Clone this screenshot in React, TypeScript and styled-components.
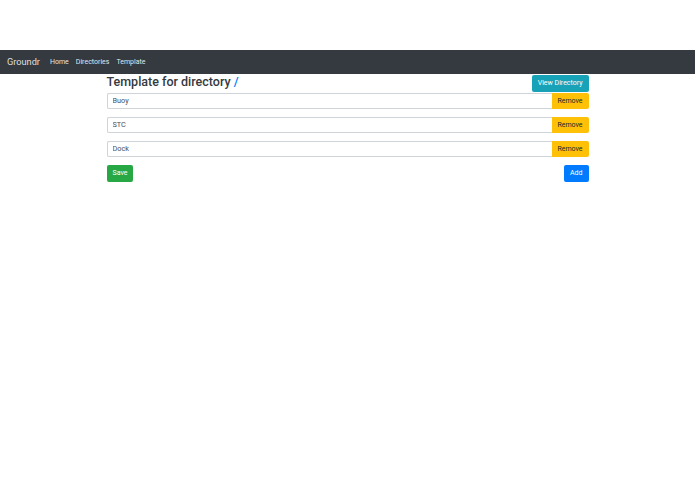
import React, { useState } from "react";
import styled, { createGlobalStyle } from "styled-components";

const GlobalStyle = createGlobalStyle`
  body {
    margin: 0;
    background: #fff;
    font-family: Roboto, "Liberation Sans", sans-serif;
    color: #212529;
    -webkit-font-smoothing: antialiased;
  }
  * {
    box-sizing: border-box;
  }
`;

const Page = styled.div`
  padding-top: 50px;
`;

const Navbar = styled.nav`
  display: flex;
  align-items: center;
  height: 23.5px;
  padding: 0 7px;
  background: #343a40;
`;

const Brand = styled.a`
  font-size: 9.2px;
  color: rgba(255, 255, 255, 0.85);
  margin-right: 10px;
  text-decoration: none;
`;

const NavLinks = styled.div`
  display: flex;
  gap: 7px;
`;

const NavLink = styled.a`
  font-size: 7px;
  color: rgba(255, 255, 255, 0.9);
  text-decoration: none;
`;

const Container = styled.main`
  width: 482px;
  margin: 0 auto;
`;

const Header = styled.div`
  display: flex;
  justify-content: space-between;
  align-items: flex-start;
  height: 19px;
`;

const Title = styled.h1`
  margin: 0;
  font-size: 12.5px;
  line-height: 16px;
  font-weight: 500;
  color: #343a40;
  span {
    color: #007bff;
  }
`;

const Button = styled.button<{ $variant: "info" | "warning" | "success" | "primary" }>`
  font-family: inherit;
  font-size: 7px;
  height: 17px;
  padding: 0 6px;
  border: none;
  border-radius: 2px;
  cursor: pointer;
  background: ${(p) =>
    ({
      info: "#17a2b8",
      warning: "#ffc107",
      success: "#28a745",
      primary: "#007bff",
    })[p.$variant]};
  color: ${(p) => (p.$variant === "warning" ? "#212529" : "#fff")};
`;

const HeaderButton = styled(Button)`
  margin-top: 1px;
`;

const Row = styled.div`
  display: flex;
  height: 16.5px;
  margin-bottom: 7.5px;
`;

const Input = styled.input`
  flex: 1;
  min-width: 0;
  height: 100%;
  padding: 0 5px;
  font-family: inherit;
  font-size: 7.3px;
  color: #495057;
  border: 1px solid #ced4da;
  border-right: none;
  border-radius: 2px 0 0 2px;
  &:focus {
    outline: none;
  }
`;

const RemoveBtn = styled(Button)`
  height: 100%;
  width: 37px;
  padding: 0;
  border-radius: 0 2px 2px 0;
`;

const Footer = styled.div`
  display: flex;
  justify-content: space-between;
`;

export default function App() {
  const [fields, setFields] = useState(["Buoy", "STC", "Dock"]);

  return (
    <Page>
      <GlobalStyle />
      <Navbar>
        <Brand href="#">Groundr</Brand>
        <NavLinks>
          <NavLink href="#">Home</NavLink>
          <NavLink href="#">Directories</NavLink>
          <NavLink href="#">Template</NavLink>
        </NavLinks>
      </Navbar>
      <Container>
        <Header>
          <Title>
            Template for directory <span>/</span>
          </Title>
          <HeaderButton $variant="info">View Directory</HeaderButton>
        </Header>
        {fields.map((f, i) => (
          <Row key={i}>
            <Input
              value={f}
              onChange={(e) =>
                setFields(fields.map((v, j) => (j === i ? e.target.value : v)))
              }
            />
            <RemoveBtn
              $variant="warning"
              onClick={() => setFields(fields.filter((_, j) => j !== i))}
            >
              Remove
            </RemoveBtn>
          </Row>
        ))}
        <Footer>
          <Button $variant="success">Save</Button>
          <Button $variant="primary" onClick={() => setFields([...fields, ""])}>
            Add
          </Button>
        </Footer>
      </Container>
    </Page>
  );
}
